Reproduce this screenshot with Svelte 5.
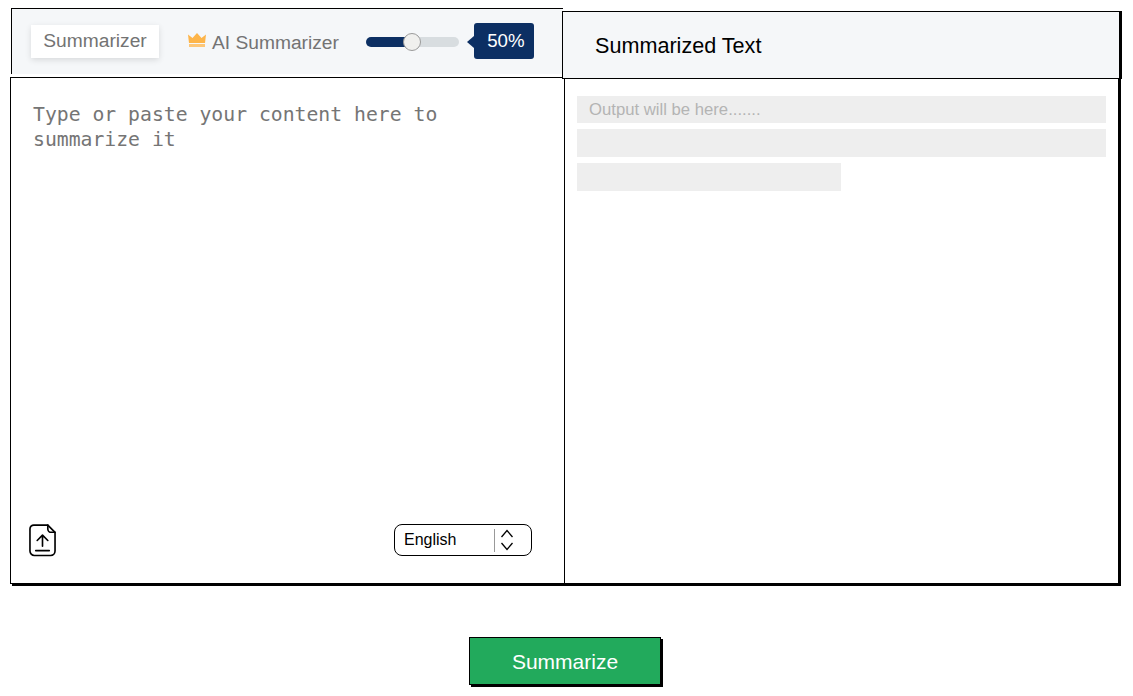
<script>
  let mode = $state('summarizer');
  let length = $state(50);
  let text = $state('');
  let language = $state('English');
</script>

<div class="page">
  <div class="heads">
    <div class="head head--left">
      <button class="tab" class:tab--active={mode === 'summarizer'} onclick={() => (mode = 'summarizer')}>Summarizer</button>
      <button class="tab tab--ai" class:tab--active={mode === 'ai'} onclick={() => (mode = 'ai')}>
        <svg class="crown" viewBox="0 0 18 14" width="18" height="14" aria-hidden="true">
          <path d="M0 1.500 4.500 5 9 0l4.500 5L18 1.500 17 10H1z" fill="#fdb54a" />
          <rect x="1" y="11" width="16" height="3" fill="#fdc778" />
        </svg>
        AI Summarizer
      </button>
      <input class="range" type="range" min="0" max="100" bind:value={length} />
      <div class="percent">{length}%</div>
    </div>
    <div class="head head--right">Summarized Text</div>
  </div>

  <div class="panels">
    <div class="panel panel--input">
      <textarea class="source" bind:value={text} placeholder="Type or paste your content here to summarize it"></textarea>
      <div class="tools">
        <button class="upload" aria-label="Upload file">
          <svg viewBox="0 0 28 34" width="27" height="33" fill="none" stroke="#000" stroke-width="1.7" stroke-linejoin="round" stroke-linecap="round">
            <path d="M5 1h14.500L27 8.500V28a4.500 4.500 0 0 1-4.500 4.500H5.500A4.500 4.500 0 0 1 1 28V5a4 4 0 0 1 4-4z" />
            <path d="M19.500 1v4a3.500 3.500 0 0 0 3.500 3.500h4" />
            <path d="M14 23V11.500M8.500 17 14 11.500 19.500 17" />
            <path d="M7 27.500h14" />
          </svg>
        </button>
        <div class="select">
          <select bind:value={language}>
            <option>English</option>
            <option>Spanish</option>
            <option>French</option>
          </select>
          <svg viewBox="0 0 14 22" width="14" height="22" fill="none" stroke="#000" stroke-width="1.3" aria-hidden="true">
            <path d="M1.500 8 7 1.500 12.500 8M1.500 14 7 20.500 12.500 14" />
          </svg>
        </div>
      </div>
    </div>
    <div class="panel panel--output">
      <div class="line">Output will be here.......</div>
      <div class="line"></div>
      <div class="line line--short"></div>
    </div>
  </div>

  <div class="actions">
    <button class="submit">Summarize</button>
  </div>
</div>

<style>
  :global(body) {
    background: #fff;
  }

  .page {
    width: 1130px;
    min-height: 696px;
    font-family: "Liberation Sans", Arial, sans-serif;
  }

  .heads {
    display: flex;
    align-items: flex-start;
    margin-left: 11px;
    padding-top: 8px;
  }

  .head {
    box-sizing: border-box;
    background: #f5f7f9;
  }

  .head--left {
    display: flex;
    align-items: center;
    width: 552px;
    height: 66px;
    border-top: 1px solid #000;
    border-left: 1px solid #000;
    padding-left: 19px;
  }

  .head--right {
    position: relative;
    display: flex;
    align-items: center;
    box-sizing: border-box;
    width: 558px;
    height: 68px;
    margin: 3px 0 0 -1px;
    padding: 2px 0 0 32px;
    border: 1px solid #000;
    box-shadow: 2px 0 0 #000;
    font-size: 21.6px;
    color: #000;
  }

  .tab {
    appearance: none;
    border: none;
    background: transparent;
    font: inherit;
    font-size: 19.2px;
    color: #737373;
    cursor: pointer;
    padding: 0;
  }

  .tab--active {
    width: 128px;
    height: 33px;
    margin-top: -1px;
    background: #fff;
    box-shadow: 0 2px 6px rgba(0, 0, 0, 0.12);
  }

  .tab--ai {
    display: flex;
    align-items: center;
    gap: 6px;
    margin: 2px 0 0 29px;
  }

  .crown {
    margin-top: -5px;
  }

  .range {
    appearance: none;
    width: 93px;
    height: 10px;
    margin: 0 0 0 27px;
    border-radius: 5px;
    background: linear-gradient(to right, #0c2f63 50%, #d8dde0 50%);
    cursor: pointer;
  }

  .range::-webkit-slider-thumb {
    appearance: none;
    box-sizing: border-box;
    width: 18px;
    height: 18px;
    border-radius: 50%;
    border: 1px solid #9a9a9a;
    background: #f0f0ee;
  }

  .percent {
    position: relative;
    box-sizing: border-box;
    width: 60px;
    height: 36px;
    margin: -2px 0 0 15px;
    padding-left: 4px;
    border-radius: 3px;
    background: #0c2f63;
    color: #fff;
    font-size: 18.67px;
    line-height: 36px;
    text-align: center;
  }

  .percent::before {
    content: "";
    position: absolute;
    left: -7px;
    top: 13px;
    border-style: solid;
    border-width: 6px 7px 6px 0;
    border-color: transparent #0c2f63 transparent transparent;
  }

  .panels {
    display: grid;
    grid-template-columns: 553px 1fr;
    box-sizing: border-box;
    width: 1109px;
    height: 507px;
    margin: -2px 0 0 10px;
    border: 1px solid #000;
    box-shadow: 2px 2px 0 #000;
  }

  .panel--input {
    display: flex;
    flex-direction: column;
    border-right: 1px solid #000;
    box-sizing: content-box;
    width: 553px;
  }

  .source {
    flex: 1;
    border: none;
    outline: none;
    resize: none;
    padding: 24px 22px 0;
    font-family: "DejaVu Sans Mono", monospace;
    font-size: 19.75px;
    line-height: 25px;
    color: #333;
  }

  .source::placeholder {
    color: #757575;
  }

  .tools {
    display: flex;
    align-items: flex-start;
    justify-content: space-between;
    padding: 0 32px 26px 18px;
  }

  .upload {
    appearance: none;
    display: flex;
    border: none;
    background: none;
    padding: 0;
    cursor: pointer;
  }

  .select {
    display: flex;
    align-items: center;
    box-sizing: border-box;
    width: 138px;
    height: 32px;
    border: 1px solid #000;
    border-radius: 8px;
  }

  .select select {
    appearance: none;
    width: 100px;
    height: 23px;
    padding: 0 0 2px 9px;
    border: none;
    border-right: 1px solid #999;
    border-radius: 0;
    outline: none;
    background: none;
    font: inherit;
    font-size: 16px;
    color: #000;
  }

  .select svg {
    margin-left: 5px;
  }

  .panel--output {
    display: flex;
    flex-direction: column;
    gap: 6px;
    padding: 17.75px 12px 0 12px;
    margin-left: 1px;
  }

  .line {
    box-sizing: border-box;
    height: 27.6px;
    padding-left: 12px;
    background: #eee;
    color: #b4b4b4;
    font-size: 16.7px;
    line-height: 27px;
  }

  .line--short {
    width: 49.9%;
  }

  .actions {
    display: flex;
    justify-content: center;
    margin-top: 53px;
  }

  .submit {
    appearance: none;
    width: 192px;
    height: 48px;
    padding: 2px 0 0;
    border: 1px solid #000;
    background: #22aa5c;
    box-shadow: 2px 2px 0 #000;
    color: #fff;
    font: inherit;
    font-size: 21px;
    cursor: pointer;
  }
</style>
